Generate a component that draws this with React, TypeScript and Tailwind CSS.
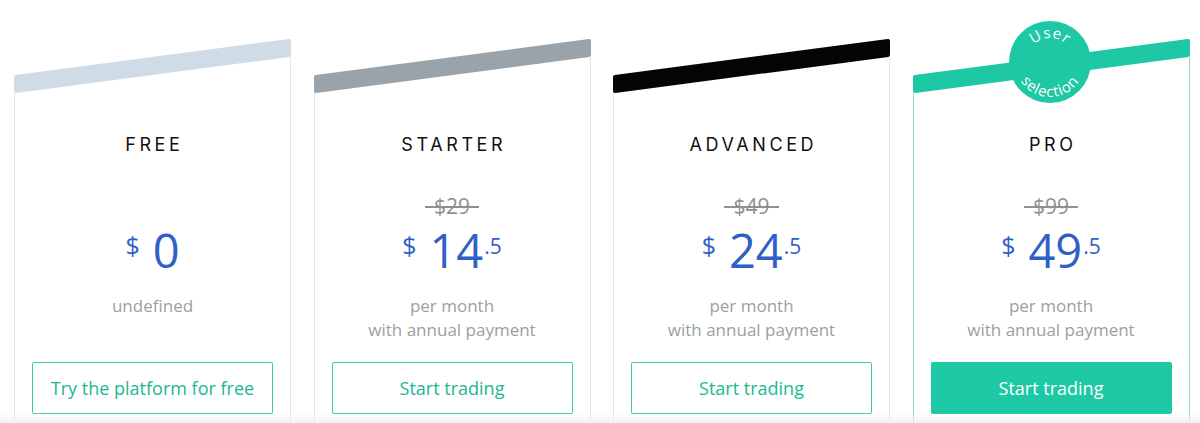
import React from "react";

type Plan = {
  name: string;
  band: string;
  borderCls: string;
  stroke: string;
  old: string | null;
  int: string;
  dec: string | null;
  desc: string[];
  btn: string;
  filled: boolean;
  badge?: boolean;
};

const plans: Plan[] = [
  {
    name: "FREE",
    band: "#cfdce7",
    borderCls: "border-[#dfe5ea]",
    stroke: "#dfe5ea",
    old: null,
    int: "0",
    dec: null,
    desc: ["undefined"],
    btn: "Try the platform for free",
    filled: false,
  },
  {
    name: "STARTER",
    band: "#9ba3aa",
    borderCls: "border-[#dfe5ea]",
    stroke: "#dfe5ea",
    old: "$29",
    int: "14",
    dec: ".5",
    desc: ["per month", "with annual payment"],
    btn: "Start trading",
    filled: false,
  },
  {
    name: "ADVANCED",
    band: "#050505",
    borderCls: "border-[#dfe5ea]",
    stroke: "#dfe5ea",
    old: "$49",
    int: "24",
    dec: ".5",
    desc: ["per month", "with annual payment"],
    btn: "Start trading",
    filled: false,
  },
  {
    name: "PRO",
    band: "#1ec8a4",
    borderCls: "border-[#93d9c9]",
    stroke: "#93d9c9",
    old: "$99",
    int: "49",
    dec: ".5",
    desc: ["per month", "with annual payment"],
    btn: "Start trading",
    filled: true,
    badge: true,
  },
];

function Badge() {
  return (
    <svg
      width="84"
      height="84"
      viewBox="0 0 84 84"
      className="absolute left-[95px] top-[-19px]"
    >
      <defs>
        <path id="topArc" d="M 18 42 A 24 24 0 0 1 66 42" />
        <path id="botArc" d="M 7 42 A 35 35 0 0 0 77 42" />
      </defs>
      <circle cx="42" cy="42" r="41" fill="#1ec8a4" />
      <text
        fill="#ffffff"
        fontSize="15"
        fontFamily="'Open Sans', sans-serif"
        letterSpacing="1"
      >
        <textPath href="#topArc" startOffset="50%" textAnchor="middle">
          User
        </textPath>
      </text>
      <text
        fill="#ffffff"
        fontSize="15"
        fontFamily="'Open Sans', sans-serif"
        letterSpacing="0.8"
      >
        <textPath href="#botArc" startOffset="50%" textAnchor="middle">
          selection
        </textPath>
      </text>
    </svg>
  );
}

function Card({ p }: { p: Plan }) {
  return (
    <div className="relative w-[277px] shrink-0 flex flex-col">
      <svg width="277" height="54" className="block">
        <polygon
          points="2,38 275,2 275,16 2,52"
          fill={p.band}
          stroke={p.band}
          strokeWidth="4"
          strokeLinejoin="round"
        />
        <line x1="276.5" y1="18" x2="276.5" y2="54" stroke={p.stroke} strokeWidth="1" />
      </svg>
      {p.badge && <Badge />}
      <div
        className={`flex-1 border-x ${p.borderCls} flex flex-col items-center pt-[40px] px-[17px] font-['Open_Sans',sans-serif]`}
      >
        <div className="h-[24px] leading-[24px] text-[18px] font-normal tracking-[0.2em] pl-[0.2em] text-[#111111] font-['Inter',sans-serif]">
          {p.name}
        </div>
        <div className="mt-[37px] h-[24px] leading-[24px] text-[21px] text-[#8c9196]">
          {p.old && (
            <span className="relative inline-block px-[9px]">
              {p.old}
              <span className="absolute left-0 right-0 top-[12px] h-[1.5px] bg-[#8c9196]" />
            </span>
          )}
        </div>
        <div className="mt-[9px] flex items-start text-[#2f60c7]">
          <span className="mt-[6px] text-[25px] leading-[25px] mr-[13px]">$</span>
          <span className="text-[47px] leading-[46px]">{p.int}</span>
          {p.dec && (
            <span className="mt-[9px] text-[21px] leading-[21px] ml-[1px]">{p.dec}</span>
          )}
        </div>
        <div className="mt-[21px] h-[48px] flex flex-col items-center text-[17px] leading-[24px] text-[#9a9fa4]">
          {p.desc.map((d) => (
            <div key={d}>{d}</div>
          ))}
        </div>
        <button
          className={
            p.filled
              ? "mt-[20px] w-full h-[52px] rounded-[2px] bg-[#1ec8a4] text-white text-[18px]"
              : "mt-[20px] w-full h-[52px] rounded-[2px] border border-[#3ccaa9] bg-white text-[#20b792] text-[18px]"
          }
        >
          {p.btn}
        </button>
        <div className="h-[40px]" />
      </div>
    </div>
  );
}

export default function App() {
  return (
    <div className="relative w-[1200px] h-[423px] overflow-hidden bg-white">
      <div className="flex gap-[22.5px] pl-[14px] pt-[39px]">
        {plans.map((p) => (
          <Card key={p.name} p={p} />
        ))}
      </div>
      <div className="absolute left-0 right-0 bottom-0 h-[10px] bg-gradient-to-b from-transparent to-[#f1f2f3]" />
    </div>
  );
}
